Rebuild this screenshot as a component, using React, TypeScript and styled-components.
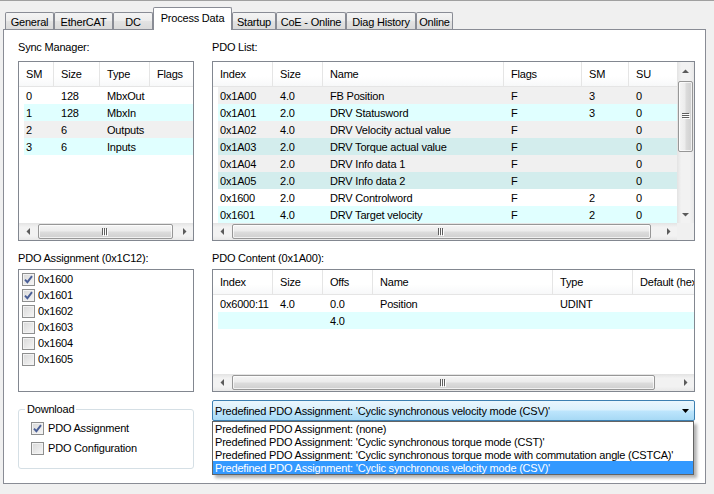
import React from "react";
import styled, { createGlobalStyle } from "styled-components";

const WHITE = "#ffffff";
const CYAN = "#e0ffff";
const GRAY = "#f0f0f0";
const TEAL = "#d3eded";

interface Column {
  title: string;
  width: number;
}

interface RowData {
  cells: string[];
  bg: string;
}

const tabs = [
  { title: "General", width: 49 },
  { title: "EtherCAT", width: 59 },
  { title: "DC", width: 40 },
  { title: "Process Data", width: 79, active: true },
  { title: "Startup", width: 44 },
  { title: "CoE - Online", width: 70 },
  { title: "Diag History", width: 70 },
  { title: "Online", width: 37 },
];

const syncColumns: Column[] = [
  { title: "SM", width: 35 },
  { title: "Size", width: 46 },
  { title: "Type", width: 50 },
  { title: "Flags", width: 60 },
];

const syncRows: RowData[] = [
  { cells: ["0", "128", "MbxOut", ""], bg: WHITE },
  { cells: ["1", "128", "MbxIn", ""], bg: CYAN },
  { cells: ["2", "6", "Outputs", ""], bg: GRAY },
  { cells: ["3", "6", "Inputs", ""], bg: CYAN },
];

const pdoColumns: Column[] = [
  { title: "Index", width: 60 },
  { title: "Size", width: 50 },
  { title: "Name", width: 181 },
  { title: "Flags", width: 78 },
  { title: "SM", width: 47 },
  { title: "SU", width: 60 },
];

const pdoRows: RowData[] = [
  { cells: ["0x1A00", "4.0", "FB Position", "F", "3", "0"], bg: GRAY },
  { cells: ["0x1A01", "2.0", "DRV Statusword", "F", "3", "0"], bg: CYAN },
  { cells: ["0x1A02", "4.0", "DRV Velocity actual value", "F", "", "0"], bg: GRAY },
  { cells: ["0x1A03", "2.0", "DRV Torque actual value", "F", "", "0"], bg: TEAL },
  { cells: ["0x1A04", "2.0", "DRV Info data 1", "F", "", "0"], bg: GRAY },
  { cells: ["0x1A05", "2.0", "DRV Info data 2", "F", "", "0"], bg: TEAL },
  { cells: ["0x1600", "2.0", "DRV Controlword", "F", "2", "0"], bg: WHITE },
  { cells: ["0x1601", "4.0", "DRV Target velocity", "F", "2", "0"], bg: CYAN },
];

const contentColumns: Column[] = [
  { title: "Index", width: 60 },
  { title: "Size", width: 50 },
  { title: "Offs", width: 50 },
  { title: "Name", width: 180 },
  { title: "Type", width: 80 },
  { title: "Default (hex)", width: 90 },
];

const contentRows: RowData[] = [
  { cells: ["0x6000:11", "4.0", "0.0", "Position", "UDINT", ""], bg: WHITE },
  { cells: ["", "", "4.0", "", "", ""], bg: CYAN },
];

const assignments = [
  { id: "0x1600", checked: true },
  { id: "0x1601", checked: true },
  { id: "0x1602" },
  { id: "0x1603" },
  { id: "0x1604" },
  { id: "0x1605" },
];

const presets = [
  "Predefined PDO Assignment: (none)",
  "Predefined PDO Assignment: 'Cyclic synchronous torque mode (CST)'",
  "Predefined PDO Assignment: 'Cyclic synchronous torque mode with commutation angle (CSTCA)'",
  "Predefined PDO Assignment: 'Cyclic synchronous velocity mode (CSV)'",
];

function CheckBox({ checked }: { checked?: boolean }) {
  return (
    <CheckFrame>
      {checked && (
        <svg width="9" height="9" viewBox="0 0 9 9">
          <path d="M1 4.6 L3.4 7.2 L8 1.2" fill="none" stroke="#4a5f97" strokeWidth="1.9" />
        </svg>
      )}
    </CheckFrame>
  );
}

function Arrow({ dir }: { dir: "left" | "right" | "up" | "down" }) {
  const paths = {
    left: "M4 0 L4 7 L0.5 3.5 Z",
    right: "M0 0 L0 7 L3.5 3.5 Z",
    up: "M0 4 L7 4 L3.5 0.5 Z",
    down: "M0 0 L7 0 L3.5 3.5 Z",
  };
  const horiz = dir === "left" || dir === "right";
  return (
    <svg width={horiz ? 4 : 7} height={horiz ? 7 : 4} viewBox={horiz ? "0 0 4 7" : "0 0 7 4"}>
      <path d={paths[dir]} fill="#5b5b5b" />
    </svg>
  );
}

function Grip({ vertical }: { vertical?: boolean }) {
  return vertical ? (
    <svg width="8" height="7" viewBox="0 0 8 7">
      {[0, 2, 4].map((y) => (
        <g key={y}>
          <rect x="0" y={y} width="7" height="1" fill="#5f5f5f" />
          <rect x="1" y={y + 1} width="7" height="1" fill="#ffffff" />
        </g>
      ))}
    </svg>
  ) : (
    <svg width="7" height="8" viewBox="0 0 7 8">
      {[0, 2, 4].map((x) => (
        <g key={x}>
          <rect x={x} y="0" width="1" height="7" fill="#5f5f5f" />
          <rect x={x + 1} y="1" width="1" height="7" fill="#ffffff" />
        </g>
      ))}
    </svg>
  );
}

function HScrollBar({ thumb }: { thumb: number }) {
  return (
    <HBar>
      <HButton>
        <Arrow dir="left" />
      </HButton>
      <HTrack>
        <HThumb style={{ width: thumb }}>
          <Grip />
        </HThumb>
      </HTrack>
      <HButton>
        <Arrow dir="right" />
      </HButton>
    </HBar>
  );
}

function VScrollBar({ thumb }: { thumb: number }) {
  return (
    <VBar>
      <VButton>
        <Arrow dir="up" />
      </VButton>
      <VTrack>
        <VThumb style={{ height: thumb }}>
          <Grip vertical />
        </VThumb>
      </VTrack>
      <VButton>
        <Arrow dir="down" />
      </VButton>
    </VBar>
  );
}

function ListView({
  columns,
  rows,
  height,
  hThumb,
  vThumb,
}: {
  columns: Column[];
  rows: RowData[];
  height: number;
  hThumb: number;
  vThumb?: number;
}) {
  const headTemplate = columns.map((c) => `${c.width}px`).join(" ");
  const rowTemplate = columns.map((c, i) => `${i === 0 ? c.width - 5 : c.width}px`).join(" ");
  return (
    <ListFrame $height={height} $vscroll={!!vThumb}>
      <ListContent>
        <HeaderRow style={{ gridTemplateColumns: headTemplate }}>
          {columns.map((c) => (
            <HeaderCell key={c.title}>{c.title}</HeaderCell>
          ))}
        </HeaderRow>
        {rows.map((r, i) => (
          <Row key={i} $bg={r.bg} style={{ gridTemplateColumns: rowTemplate }}>
            {r.cells.map((cell, j) => (
              <Cell key={j} $first={j === 0}>
                {cell}
              </Cell>
            ))}
          </Row>
        ))}
      </ListContent>
      {vThumb ? <VScrollBar thumb={vThumb} /> : null}
      <HScrollBar thumb={hThumb} />
      {vThumb ? <Corner /> : null}
    </ListFrame>
  );
}

export default function App() {
  return (
    <>
      <GlobalStyle />
      <Window>
        <TabStrip>
          {tabs.map((t) => (
            <Tab key={t.title} $active={!!t.active} style={{ width: t.width }}>
              {t.title}
            </Tab>
          ))}
        </TabStrip>
        <Panel>
          <Label>Sync Manager:</Label>
          <Label>PDO List:</Label>
          <TopBox>
            <ListView columns={syncColumns} rows={syncRows} height={180} hThumb={135} />
          </TopBox>
          <TopBox>
            <ListView columns={pdoColumns} rows={pdoRows} height={180} hThumb={419} vThumb={71} />
          </TopBox>
          <SecondLabel>PDO Assignment (0x1C12):</SecondLabel>
          <SecondLabel>PDO Content (0x1A00):</SecondLabel>
          <CheckList>
            {assignments.map((a) => (
              <CheckItem key={a.id}>
                <CheckBox checked={a.checked} />
                <span>{a.id}</span>
              </CheckItem>
            ))}
          </CheckList>
          <SecondBox>
            <ListView columns={contentColumns} rows={contentRows} height={123} hThumb={423} />
          </SecondBox>
          <GroupBox>
            <GroupLegend>Download</GroupLegend>
            <GroupItem>
              <CheckBox checked />
              <span>PDO Assignment</span>
            </GroupItem>
            <GroupItem>
              <CheckBox />
              <span>PDO Configuration</span>
            </GroupItem>
          </GroupBox>
          <ComboBox>
            <ComboText>{presets[3]}</ComboText>
            <ComboArrow>
              <svg width="7" height="4" viewBox="0 0 7 4">
                <path d="M0 0 L7 0 L3.5 4 Z" fill="#000" />
              </svg>
            </ComboArrow>
            <DropList>
              {presets.map((p, i) => (
                <DropItem key={p} $selected={i === 3}>
                  {p}
                </DropItem>
              ))}
            </DropList>
          </ComboBox>
        </Panel>
      </Window>
    </>
  );
}

const GlobalStyle = createGlobalStyle`
  html, body {
    margin: 0;
    padding: 0;
    background: #f0f0f0;
  }
  body {
    font-family: "Liberation Sans", Arial, sans-serif;
    font-size: 11px;
    letter-spacing: -0.2px;
    color: #000;
  }
`;

const Window = styled.div`
  width: 714px;
  height: 494px;
  box-sizing: border-box;
  border-top: 1px solid #a0a0a0;
  background: #f0f0f0;
  overflow: hidden;
`;

const TabStrip = styled.div`
  height: 28px;
  display: flex;
  align-items: flex-end;
  padding-left: 5px;
`;

const Tab = styled.div<{ $active: boolean }>`
  box-sizing: border-box;
  flex: none;
  height: ${(p) => (p.$active ? 23 : 17)}px;
  margin-bottom: ${(p) => (p.$active ? -1 : 0)}px;
  border: 1px solid #898c95;
  border-bottom: none;
  border-radius: 2px 2px 0 0;
  padding-top: ${(p) => (p.$active ? 4 : 3)}px;
  line-height: 13px;
  text-align: center;
  white-space: nowrap;
  background: ${(p) =>
    p.$active ? "#ffffff" : "linear-gradient(#f4f4f4, #ececec 50%, #e3e3e3 51%, #dadada)"};
  position: ${(p) => (p.$active ? "relative" : "static")};
  z-index: ${(p) => (p.$active ? 1 : 0)};
`;

const Panel = styled.div`
  box-sizing: border-box;
  width: 703px;
  height: 455px;
  margin-left: 3px;
  border: 1px solid #898c95;
  background: #ffffff;
  padding: 11px 10px 0 14px;
  display: grid;
  grid-template-columns: 176px 483px;
  column-gap: 18px;
  align-items: start;
  align-content: start;
`;

const Label = styled.div`
  height: 13px;
  line-height: 13px;
  white-space: nowrap;
`;

const SecondLabel = styled(Label)`
  margin-top: 11px;
`;

const TopBox = styled.div`
  margin-top: 7px;
`;

const SecondBox = styled.div`
  margin-top: 4px;
`;

const ListFrame = styled.div<{ $height: number; $vscroll: boolean }>`
  box-sizing: border-box;
  height: ${(p) => p.$height}px;
  border: 1px solid #828790;
  background: #ffffff;
  display: grid;
  grid-template-columns: ${(p) => (p.$vscroll ? "1fr 17px" : "1fr")};
  grid-template-rows: 1fr 17px;
  overflow: hidden;
`;

const ListContent = styled.div`
  overflow: hidden;
  min-width: 0;
  min-height: 0;
`;

const HeaderRow = styled.div`
  display: grid;
  height: 25px;
  box-sizing: border-box;
  border-bottom: 1px solid #e5e5e5;
  background: linear-gradient(#ffffff, #ffffff 60%, #f7f8f9);
`;

const HeaderCell = styled.div`
  box-sizing: border-box;
  padding-left: 7px;
  line-height: 25px;
  border-right: 1px solid #e5e5e5;
  white-space: nowrap;
  overflow: hidden;
`;

const Row = styled.div<{ $bg: string }>`
  display: grid;
  height: 17px;
  margin-left: 5px;
  background: ${(p) => p.$bg};
`;

const Cell = styled.div<{ $first: boolean }>`
  padding-left: ${(p) => (p.$first ? 2 : 7)}px;
  line-height: 18px;
  white-space: nowrap;
  overflow: hidden;
`;

const HBar = styled.div`
  display: flex;
  height: 17px;
  min-width: 0;
  background: linear-gradient(#e3e3e3, #f2f2f2 25%, #f2f2f2 75%, #e8e8e8);
`;

const HButton = styled.div`
  width: 17px;
  flex: none;
  display: flex;
  align-items: center;
  justify-content: center;
`;

const HTrack = styled.div`
  flex: 1;
  display: flex;
  align-items: center;
  padding-left: 2px;
  min-width: 0;
`;

const HThumb = styled.div`
  box-sizing: border-box;
  height: 15px;
  border: 1px solid #979797;
  border-radius: 2px;
  background: linear-gradient(#f5f5f5, #ececec 45%, #dcdcdc 55%, #cfcfcf);
  box-shadow: inset 0 0 0 1px rgba(255, 255, 255, 0.7);
  display: flex;
  align-items: center;
  justify-content: center;
`;

const VBar = styled.div`
  grid-row: 1;
  grid-column: 2;
  display: flex;
  flex-direction: column;
  min-height: 0;
  background: linear-gradient(to right, #e3e3e3, #f2f2f2 25%, #f2f2f2 75%, #e8e8e8);
`;

const VButton = styled.div`
  height: 17px;
  flex: none;
  display: flex;
  align-items: center;
  justify-content: center;
`;

const VTrack = styled.div`
  flex: 1;
  display: flex;
  flex-direction: column;
  align-items: center;
  padding-top: 2px;
`;

const VThumb = styled.div`
  box-sizing: border-box;
  width: 15px;
  border: 1px solid #979797;
  border-radius: 2px;
  background: linear-gradient(to right, #f5f5f5, #ececec 45%, #dcdcdc 55%, #cfcfcf);
  box-shadow: inset 0 0 0 1px rgba(255, 255, 255, 0.7);
  display: flex;
  align-items: center;
  justify-content: center;
`;

const Corner = styled.div`
  background: #f0f0f0;
`;

const CheckFrame = styled.span`
  box-sizing: border-box;
  width: 13px;
  height: 13px;
  flex: none;
  border: 1px solid #8e8f8f;
  background: linear-gradient(135deg, #d8d8d8, #f6f6f6);
  box-shadow: inset 0 0 0 1px #f2f2f2;
  display: inline-flex;
  align-items: center;
  justify-content: center;
`;

const CheckList = styled.div`
  box-sizing: border-box;
  margin-top: 4px;
  height: 123px;
  border: 1px solid #828790;
  background: #ffffff;
  padding: 1px 0 0 3px;
`;

const CheckItem = styled.div`
  display: flex;
  align-items: center;
  gap: 3px;
  height: 16px;
`;

const GroupBox = styled.fieldset`
  margin: 11px 0 0;
  padding: 2px 0 10px 12px;
  min-width: 0;
  border: 1px solid #d5dfe5;
  border-radius: 3px;
`;

const GroupLegend = styled.legend`
  margin-left: -6px;
  padding: 0 2px;
  line-height: 13px;
`;

const GroupItem = styled.div`
  display: flex;
  align-items: center;
  gap: 4px;
  height: 20px;
`;

const ComboBox = styled.div`
  position: relative;
  box-sizing: border-box;
  margin-top: 8px;
  height: 21px;
  border: 1px solid #3c7fb1;
  border-radius: 2px;
  background: linear-gradient(#eaf6fd, #d9f0fc 49%, #bee6fd 51%, #a7d9f5);
  display: flex;
  align-items: center;
  padding-left: 2px;
`;

const ComboText = styled.div`
  flex: 1;
  white-space: nowrap;
  overflow: hidden;
`;

const ComboArrow = styled.div`
  width: 7px;
  margin-right: 5px;
  display: flex;
`;

const DropList = styled.div`
  position: absolute;
  top: 20px;
  left: -1px;
  width: 482px;
  box-sizing: border-box;
  border: 1px solid #646464;
  background: #ffffff;
  box-shadow: 3px 3px 3px rgba(0, 0, 0, 0.3);
  z-index: 2;
`;

const DropItem = styled.div<{ $selected: boolean }>`
  height: 13px;
  line-height: 14px;
  padding-left: 2px;
  white-space: nowrap;
  background: ${(p) => (p.$selected ? "#3399ff" : "transparent")};
  color: ${(p) => (p.$selected ? "#ffffff" : "#000000")};
`;
